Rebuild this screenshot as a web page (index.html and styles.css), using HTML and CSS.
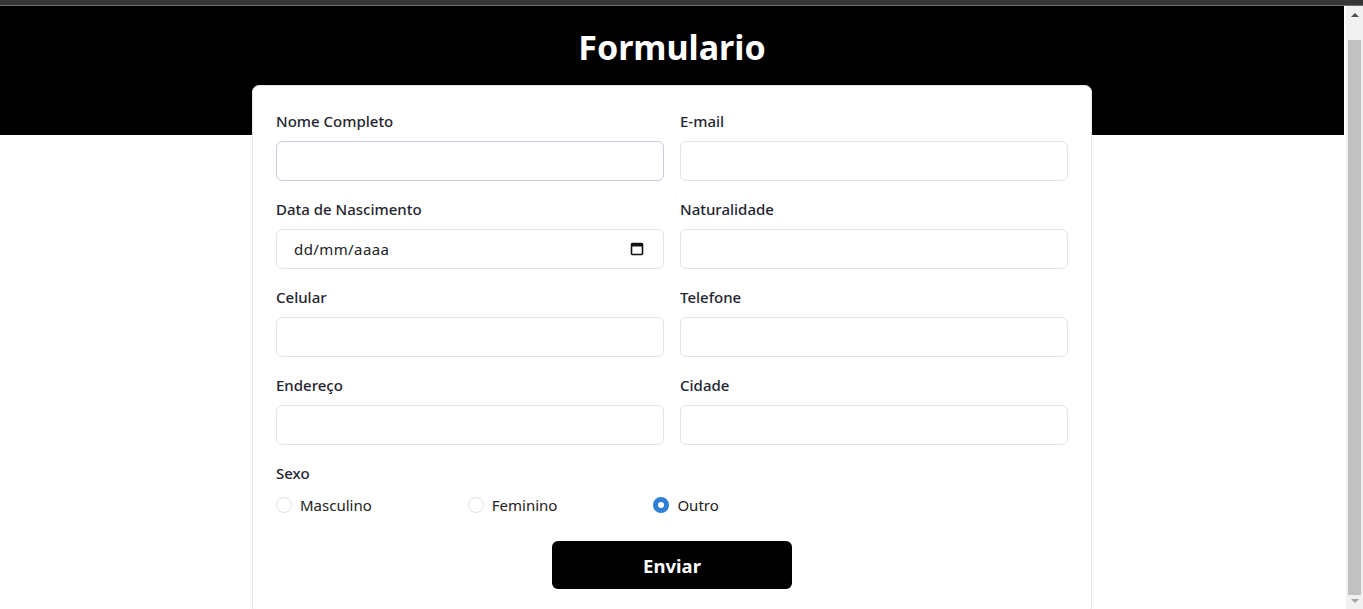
FILE: index.html
```html
<!DOCTYPE html>
<html lang="pt-BR">
<head>
<meta charset="utf-8">
<title>Formulario</title>
<link rel="stylesheet" href="styles.css">
</head>
<body>
<div class="chrome-bar"></div>
<div class="window">
  <div class="page">
    <header class="hero">
      <h1 class="hero-title">Formulario</h1>
    </header>
    <main class="card">
      <form class="form">
        <div class="grid">
          <div class="field">
            <label class="field-label">Nome Completo</label>
            <input class="input input-focus" type="text">
          </div>
          <div class="field">
            <label class="field-label">E-mail</label>
            <input class="input" type="text">
          </div>
          <div class="field">
            <label class="field-label">Data de Nascimento</label>
            <div class="date-wrap">
              <input class="input date-input" type="text" placeholder="dd/mm/aaaa">
              <svg class="cal-icon" width="14" height="14" viewBox="0 0 14 14"><rect x="1.5" y="1.5" width="11" height="11" rx="1" fill="none" stroke="#111" stroke-width="1.6"/><rect x="1.5" y="1.5" width="11" height="3" fill="#111"/></svg>
            </div>
          </div>
          <div class="field">
            <label class="field-label">Naturalidade</label>
            <input class="input" type="text">
          </div>
          <div class="field">
            <label class="field-label">Celular</label>
            <input class="input" type="text">
          </div>
          <div class="field">
            <label class="field-label">Telefone</label>
            <input class="input" type="text">
          </div>
          <div class="field">
            <label class="field-label">Endereço</label>
            <input class="input" type="text">
          </div>
          <div class="field">
            <label class="field-label">Cidade</label>
            <input class="input" type="text">
          </div>
        </div>
        <div class="sexo">
          <span class="field-label">Sexo</span>
          <div class="radios">
            <label class="radio"><input type="radio" name="sexo"><span>Masculino</span></label>
            <label class="radio"><input type="radio" name="sexo"><span>Feminino</span></label>
            <label class="radio"><input type="radio" name="sexo" checked><span>Outro</span></label>
          </div>
        </div>
        <div class="actions">
          <button type="button" class="submit">Enviar</button>
        </div>
      </form>
    </main>
  </div>
  <div class="scrollbar">
    <div class="sb-btn"><span class="arrow-up"></span></div>
    <div class="sb-track"><div class="sb-thumb"></div></div>
    <div class="sb-btn sb-btn-down"><span class="arrow-down"></span></div>
  </div>
</div>
</body>
</html>
```
FILE: styles.css
```css
html, body {
  margin: 0;
  padding: 0;
  height: 100%;
  overflow: hidden;
  background: #ffffff;
  font-family: "Noto Sans", "Open Sans", sans-serif;
}

.chrome-bar {
  height: 5px;
  background: #363636;
  border-bottom: 1px solid #6e6e6e;
}

.window {
  display: flex;
  height: 603px;
  overflow: hidden;
}

.page {
  flex: 1 1 0;
  min-width: 0;
  padding-right: 2px;
}

/* fake classic scrollbar */
.scrollbar {
  flex: 0 0 17px;
  width: 17px;
  display: flex;
  flex-direction: column;
  background: #f1f1f1;
}
.sb-btn {
  height: 17px;
  flex: 0 0 17px;
  display: flex;
  align-items: center;
  justify-content: center;
}
.sb-btn-down {
  height: 14px;
  flex-basis: 14px;
  align-items: flex-start;
  padding-top: 4px;
  box-sizing: border-box;
}
.arrow-up {
  width: 0;
  height: 0;
  border-left: 4px solid transparent;
  border-right: 4px solid transparent;
  border-bottom: 4px solid #505050;
}
.arrow-down {
  width: 0;
  height: 0;
  border-left: 4px solid transparent;
  border-right: 4px solid transparent;
  border-top: 4px solid #a3a3a3;
}
.sb-track {
  flex: 1 1 auto;
  display: flex;
  flex-direction: column;
  justify-content: flex-end;
  padding: 0 2px;
}
.sb-thumb {
  height: 555px;
  background: #c1c1c1;
}

.hero {
  background: #000000;
  height: 129px;
  display: flex;
  justify-content: center;
}

.hero-title {
  margin: 17px 0 0;
  color: #ffffff;
  font-size: 34px;
  font-weight: 700;
  line-height: 48px;
  height: 48px;
}

.card {
  width: 840px;
  box-sizing: border-box;
  margin: -50px auto 0;
  background: #ffffff;
  border: 1px solid #e6e8eb;
  border-radius: 7px;
  padding: 24px 23px 24px;
}

.grid {
  display: grid;
  grid-template-columns: 1fr 1fr;
  column-gap: 16px;
  row-gap: 17px;
}

.field {
  display: flex;
  flex-direction: column;
  gap: 9px;
}

.field-label {
  display: block;
  font-size: 15px;
  line-height: 22px;
  font-weight: 550;
  color: #1f2430;
}

.input {
  box-sizing: border-box;
  width: 100%;
  height: 40px;
  border: 1px solid #e2e6ec;
  border-radius: 6px;
  padding: 0 16px;
  font-family: inherit;
  font-size: 15px;
  background: #ffffff;
  outline: none;
}

.input-focus {
  border-color: #c6d0dc;
}

.date-wrap {
  position: relative;
}

.date-input {
  padding-left: 17px;
}

.date-input::placeholder {
  color: #222;
  opacity: 1;
  letter-spacing: 0.4px;
}

.cal-icon {
  position: absolute;
  right: 20px;
  top: 13px;
}

.sexo {
  margin-top: 17px;
  display: flex;
  flex-direction: column;
  gap: 9px;
}

.radios {
  display: flex;
  gap: 96px;
}

.radio {
  display: flex;
  align-items: center;
  gap: 8px;
  height: 24px;
  font-size: 15px;
  color: #222;
}

.radio input {
  appearance: none;
  -webkit-appearance: none;
  margin: 0;
  width: 16px;
  height: 16px;
  border-radius: 50%;
  border: 1.5px solid #dde2ea;
  box-sizing: border-box;
  background: #fff;
}

.radio input:checked {
  border: 5px solid #2f7fd6;
  background: #fff;
}

.actions {
  display: flex;
  justify-content: center;
  margin-top: 24px;
}

.submit {
  width: 240px;
  height: 48px;
  background: #000000;
  color: #ffffff;
  border: none;
  border-radius: 6px;
  font-family: inherit;
  font-size: 18.5px;
  font-weight: 700;
}
```
